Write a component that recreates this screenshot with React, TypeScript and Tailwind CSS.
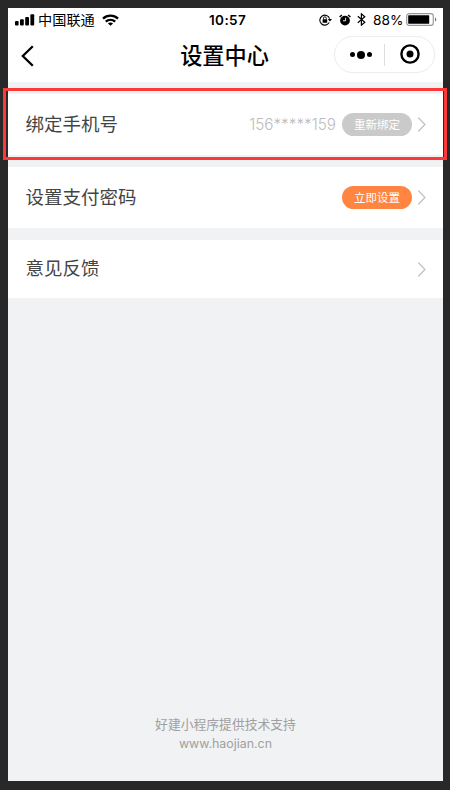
import type { ReactNode } from 'react';

interface SettingRow {
  id: string;
  label: string;
  value?: string;
  action?: string;
  rowClass: string;
  actionClass?: string;
}

const rows: SettingRow[] = [
  {
    id: 'phone',
    label: '绑定手机号',
    value: '156*****159',
    action: '重新绑定',
    rowClass: 'h-[61px]',
    actionClass: 'bg-[#cacaca]',
  },
  {
    id: 'password',
    label: '设置支付密码',
    action: '立即设置',
    rowClass: 'h-[61px]',
    actionClass: 'bg-[#ff8540]',
  },
  { id: 'feedback', label: '意见反馈', rowClass: 'h-[58px]' },
];

function SignalIcon() {
  return (
    <svg width="20" height="12" viewBox="0 0 20 12" className="fill-black">
      <rect x="0" y="7" width="3.6" height="4.6" rx="1" />
      <rect x="5" y="5.2" width="3.8" height="6.4" rx="1" />
      <rect x="10.2" y="3" width="3.8" height="8.6" rx="1" />
      <rect x="15.4" y="0.2" width="3.8" height="11.4" rx="1" />
    </svg>
  );
}

function WifiIcon() {
  return (
    <svg width="17" height="12" viewBox="0 0 17 12" fill="none" stroke="#000" strokeWidth="2.3">
      <path d="M1 4.6C5.2 0.6 11.8 0.6 16 4.6" />
      <path d="M3.8 7.7C6.5 5.2 10.5 5.2 13.2 7.7" />
      <path d="M8.5 11.8L5.9 9.4C7.4 8.2 9.6 8.2 11.1 9.4Z" fill="#000" stroke="none" />
    </svg>
  );
}

function RotationLockIcon() {
  return (
    <svg width="13" height="12" viewBox="0 0 13 12" fill="none" stroke="#000">
      <path d="M10.2 8.6A5 5 0 1 1 10.6 4.6" strokeWidth="1.1" />
      <path d="M8.8 5H13L10.9 7.6Z" fill="#000" stroke="none" />
      <rect x="3.6" y="5.2" width="4.6" height="3.5" rx="0.5" fill="#000" stroke="none" />
      <path d="M4.5 5.4V4.2A1.4 1.4 0 0 1 7.3 4.2V5.4" strokeWidth="0.9" />
    </svg>
  );
}

function AlarmIcon() {
  return (
    <svg width="12" height="12" viewBox="0 0 12 12">
      <circle cx="6" cy="6.6" r="4.9" />
      <path d="M0.6 3L2.9 1M11.4 3L9.1 1" stroke="#000" strokeWidth="1.5" />
      <path d="M6.6 3.8V6.8H4" fill="none" stroke="#fff" strokeWidth="0.9" />
    </svg>
  );
}

function BluetoothIcon() {
  return (
    <svg width="9" height="13" viewBox="0 0 9 13" fill="none" stroke="#000" strokeWidth="1.2">
      <path d="M0.8 3.3L7.8 9.3L4.4 12.2V0.8L7.8 3.7L0.8 9.7" />
    </svg>
  );
}

function BatteryIcon() {
  return (
    <svg width="31" height="13" viewBox="0 0 31 13">
      <rect x="0.7" y="0.7" width="26.6" height="11.6" rx="2.4" fill="none" stroke="#999" strokeWidth="1.2" />
      <rect x="2.2" y="2.2" width="21" height="8.6" rx="0.6" />
      <path d="M29 4.5C30.7 5 30.7 8 29 8.5Z" fill="#777" />
    </svg>
  );
}

function Chevron() {
  return (
    <svg width="8" height="15" viewBox="0 0 8 15" fill="none" stroke="#c4c4c4" strokeWidth="1.4" className="ml-1.5">
      <path d="M0.2 0.5L6.9 7.5L0.2 14.5" />
    </svg>
  );
}

function StatusBar() {
  return (
    <div className="grid h-6 grid-cols-[201px_1fr_auto] items-center pl-[7px] pr-[6px]">
      <div className="flex items-center">
        <SignalIcon />
        <span className="-mt-px ml-[3px] text-[14.2px]">中国联通</span>
        <span className="ml-[7px]"><WifiIcon /></span>
      </div>
      <div className="-ml-[7px] font-['Inter'] text-[13.5px] font-semibold tracking-[0.4px]">10:57</div>
      <div className="flex items-center">
        <RotationLockIcon />
        <span className="ml-[7px]"><AlarmIcon /></span>
        <span className="ml-[6px]"><BluetoothIcon /></span>
        <span className="ml-[7px] w-[31px] whitespace-nowrap font-['Inter'] text-[13.7px]">88%</span>
        <span className="ml-[2px]"><BatteryIcon /></span>
      </div>
    </div>
  );
}

function NavBar() {
  return (
    <div className="grid h-[50px] grid-cols-[101px_1fr_101px] items-start pl-[13px] pr-[8px]">
      <svg width="13" height="22" viewBox="0 0 13 22" fill="none" stroke="#000" strokeWidth="2.3" className="mt-[13px]">
        <path d="M11.8 1.2L1.8 11L11.8 20.8" />
      </svg>
      <h1 className="-ml-[7px] mt-[5px] text-center text-[22.2px] font-medium leading-[34px]">设置中心</h1>
      <div className="mt-1 flex h-[37px] items-center rounded-full border border-[#ececec]">
        <div className="flex h-[22px] w-[50px] items-center justify-center gap-[2px] border-r border-[#ddd] pl-[2px]">
          <span className="size-[5px] rounded-full bg-black" />
          <span className="size-[8px] rounded-full bg-black" />
          <span className="size-[5px] rounded-full bg-black" />
        </div>
        <div className="flex flex-1 justify-center pb-px">
          <svg width="20" height="20" viewBox="0 0 20 20">
            <circle cx="10" cy="10" r="8.6" fill="none" stroke="#000" strokeWidth="2.4" />
            <circle cx="10" cy="10" r="3.5" />
          </svg>
        </div>
      </div>
    </div>
  );
}

function Row({ row, children }: { row: SettingRow; children?: ReactNode }) {
  return (
    <div className={`relative mt-3 flex items-center bg-white pl-[17.5px] pr-[17px] ${row.rowClass}`}>
      <span className="flex-1 pb-0.5 text-[18.5px] text-[#444]">{row.label}</span>
      {row.value && (
        <span className="mr-1.5 pt-px font-['Inter'] text-[15.3px] font-light text-[#bcbcbc]">{row.value}</span>
      )}
      {row.action && (
        <button className={`h-[23px] w-[70px] rounded-full text-[11.5px] text-white ${row.actionClass}`}>
          {row.action}
        </button>
      )}
      <Chevron />
      {children}
    </div>
  );
}

export default function App() {
  return (
    <div className="h-[790px] w-[450px] overflow-hidden bg-[#282828] pl-2 pt-2 font-['Noto_Sans_CJK_SC',sans-serif] text-black">
      <div className="flex h-[773px] w-[435px] flex-col bg-[#f0f2f4]">
        <div className="bg-white">
          <StatusBar />
          <NavBar />
        </div>
        {rows.map((row) => (
          <Row key={row.id} row={row}>
            {/* Highlight frame runs slightly past the screen edges */}
            {row.id === 'phone' && (
              <div className="absolute -left-[5px] -right-[4px] -top-[6px] h-[72px] border-[3px] border-[#fc3838]" />
            )}
          </Row>
        ))}
        <footer className="mt-auto pb-[28px] text-center text-[12.8px] leading-[19px] text-[#a0a0a0]">
          <p className="-mt-px mb-px">好建小程序提供技术支持</p>
          <p className="font-['Inter'] text-[12.4px]">www.haojian.cn</p>
        </footer>
      </div>
    </div>
  );
}
